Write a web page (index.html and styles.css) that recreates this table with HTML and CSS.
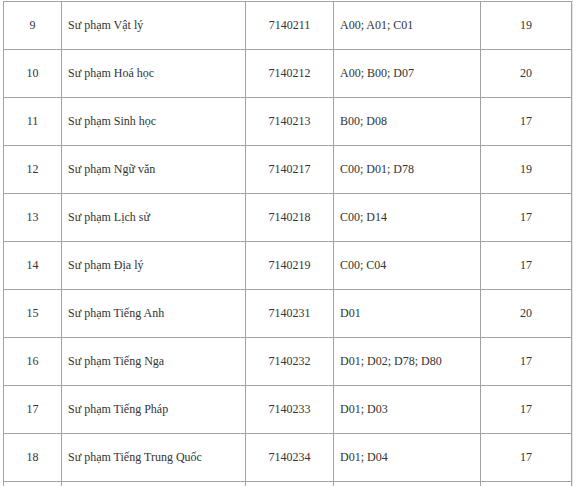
FILE: index.html
```html
<!DOCTYPE html>
<html lang="vi">
<head>
<meta charset="utf-8">
<link rel="stylesheet" href="styles.css">
</head>
<body>
<div class="frame">
<table class="scores">
<colgroup>
<col class="c-no"><col class="c-name"><col class="c-code"><col class="c-combo"><col class="c-score">
</colgroup>
<tbody>
<tr><td class="center">9</td><td>Sư phạm Vật lý</td><td class="center">7140211</td><td>A00; A01; C01</td><td class="center">19</td></tr>
<tr><td class="center">10</td><td>Sư phạm Hoá học</td><td class="center">7140212</td><td>A00; B00; D07</td><td class="center">20</td></tr>
<tr><td class="center">11</td><td>Sư phạm Sinh học</td><td class="center">7140213</td><td>B00; D08</td><td class="center">17</td></tr>
<tr><td class="center">12</td><td>Sư phạm Ngữ văn</td><td class="center">7140217</td><td>C00; D01; D78</td><td class="center">19</td></tr>
<tr><td class="center">13</td><td>Sư phạm Lịch sử</td><td class="center">7140218</td><td>C00; D14</td><td class="center">17</td></tr>
<tr><td class="center">14</td><td>Sư phạm Địa lý</td><td class="center">7140219</td><td>C00; C04</td><td class="center">17</td></tr>
<tr><td class="center">15</td><td>Sư phạm Tiếng Anh</td><td class="center">7140231</td><td>D01</td><td class="center">20</td></tr>
<tr><td class="center">16</td><td>Sư phạm Tiếng Nga</td><td class="center">7140232</td><td>D01; D02; D78; D80</td><td class="center">17</td></tr>
<tr><td class="center">17</td><td>Sư phạm Tiếng Pháp</td><td class="center">7140233</td><td>D01; D03</td><td class="center">17</td></tr>
<tr><td class="center">18</td><td>Sư phạm Tiếng Trung Quốc</td><td class="center">7140234</td><td>D01; D04</td><td class="center">17</td></tr>
<tr><td class="center"></td><td></td><td class="center"></td><td></td><td class="center"></td></tr>
</tbody>
</table>
</div>
</body>
</html>
```

FILE: styles.css
```css
html, body {
  margin: 0;
  padding: 0;
  background: #ffffff;
}
body {
  font-family: "Liberation Serif", "Times New Roman", serif;
  font-size: 12px;
  color: #333333;
  overflow: hidden;
}
.frame {
  width: 573px;
  padding: 1px 0 0 3px;
  box-sizing: border-box;
  border-right: 1px solid #e6e6e6;
  height: 486px;
  overflow: hidden;
}
.scores {
  border-collapse: collapse;
  table-layout: fixed;
  width: 568px;
}
.c-no { width: 58px; }
.c-name { width: 184px; }
.c-code { width: 88px; }
.c-combo { width: 147px; }
.c-score { width: 91px; }
.scores td {
  border: 1px solid #a3a3a3;
  height: 48px;
  padding: 0 6px;
  vertical-align: middle;
  box-sizing: border-box;
  white-space: nowrap;
}
.scores td.center {
  text-align: center;
}
```
